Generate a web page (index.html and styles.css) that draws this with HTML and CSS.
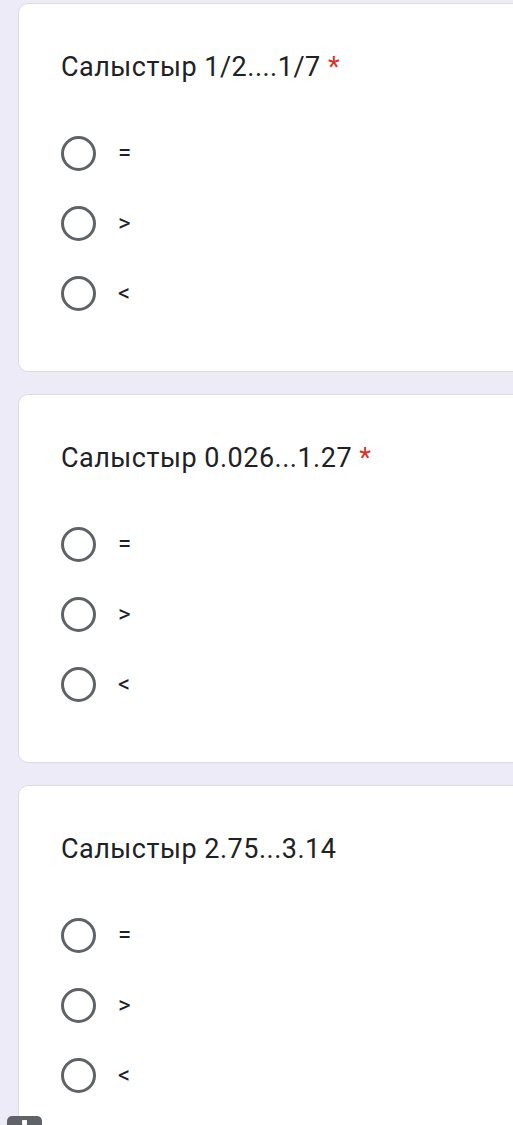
FILE: index.html
```html
<!DOCTYPE html>
<html lang="kk">
<head>
<meta charset="utf-8">
<link rel="stylesheet" href="styles.css">
</head>
<body>
<main class="form">
  <section class="card">
    <h2 class="title">Салыстыр 1/2....1/7 <span class="req">*</span></h2>
    <div class="options">
      <label class="opt"><span class="radio"></span><span class="label">=</span></label>
      <label class="opt"><span class="radio"></span><span class="label">&gt;</span></label>
      <label class="opt"><span class="radio"></span><span class="label">&lt;</span></label>
    </div>
  </section>
  <section class="card">
    <h2 class="title">Салыстыр 0.026...1.27 <span class="req">*</span></h2>
    <div class="options">
      <label class="opt"><span class="radio"></span><span class="label">=</span></label>
      <label class="opt"><span class="radio"></span><span class="label">&gt;</span></label>
      <label class="opt"><span class="radio"></span><span class="label">&lt;</span></label>
    </div>
  </section>
  <section class="card">
    <h2 class="title">Салыстыр 2.75...3.14</h2>
    <div class="options">
      <label class="opt"><span class="radio"></span><span class="label">=</span></label>
      <label class="opt"><span class="radio"></span><span class="label">&gt;</span></label>
      <label class="opt"><span class="radio"></span><span class="label">&lt;</span></label>
    </div>
  </section>
</main>
<div class="badge"><span class="dot"></span></div>
</body>
</html>
```
FILE: styles.css
```css
html, body {
  margin: 0;
  padding: 0;
}
body {
  background: #eeebf8;
  font-family: Roboto, "Noto Sans", Arial, sans-serif;
  color: #202124;
  overflow: hidden;
  height: 1125px;
  position: relative;
}
.form {
  display: flex;
  flex-direction: column;
  gap: 22px;
  padding-top: 3px;
  margin-left: 18px;
  margin-right: -30px;
}
.card {
  background: #fff;
  border: 1px solid #dadce0;
  border-radius: 10px;
  padding: 45px 20px 43px 42px;
}
.title {
  margin: 0;
  font-size: 27px;
  font-weight: 400;
  line-height: 36px;
  letter-spacing: 0.5px;
}
.req {
  color: #d93025;
}
.options {
  margin-top: 33px;
  display: flex;
  flex-direction: column;
}
.opt {
  height: 70px;
  display: flex;
  align-items: center;
  gap: 22px;
}
.radio {
  width: 35px;
  height: 35px;
  box-sizing: border-box;
  border: 3px solid #5f6368;
  border-radius: 50%;
}
.label {
  font-size: 24px;
}
.badge {
  position: absolute;
  left: 7px;
  top: 1116px;
  width: 35px;
  height: 20px;
  background: #5f6368;
  border-radius: 5px;
}
.dot {
  position: absolute;
  left: 15px;
  top: 4px;
  width: 5px;
  height: 5px;
  background: #fff;
  border-radius: 1px;
}
```
